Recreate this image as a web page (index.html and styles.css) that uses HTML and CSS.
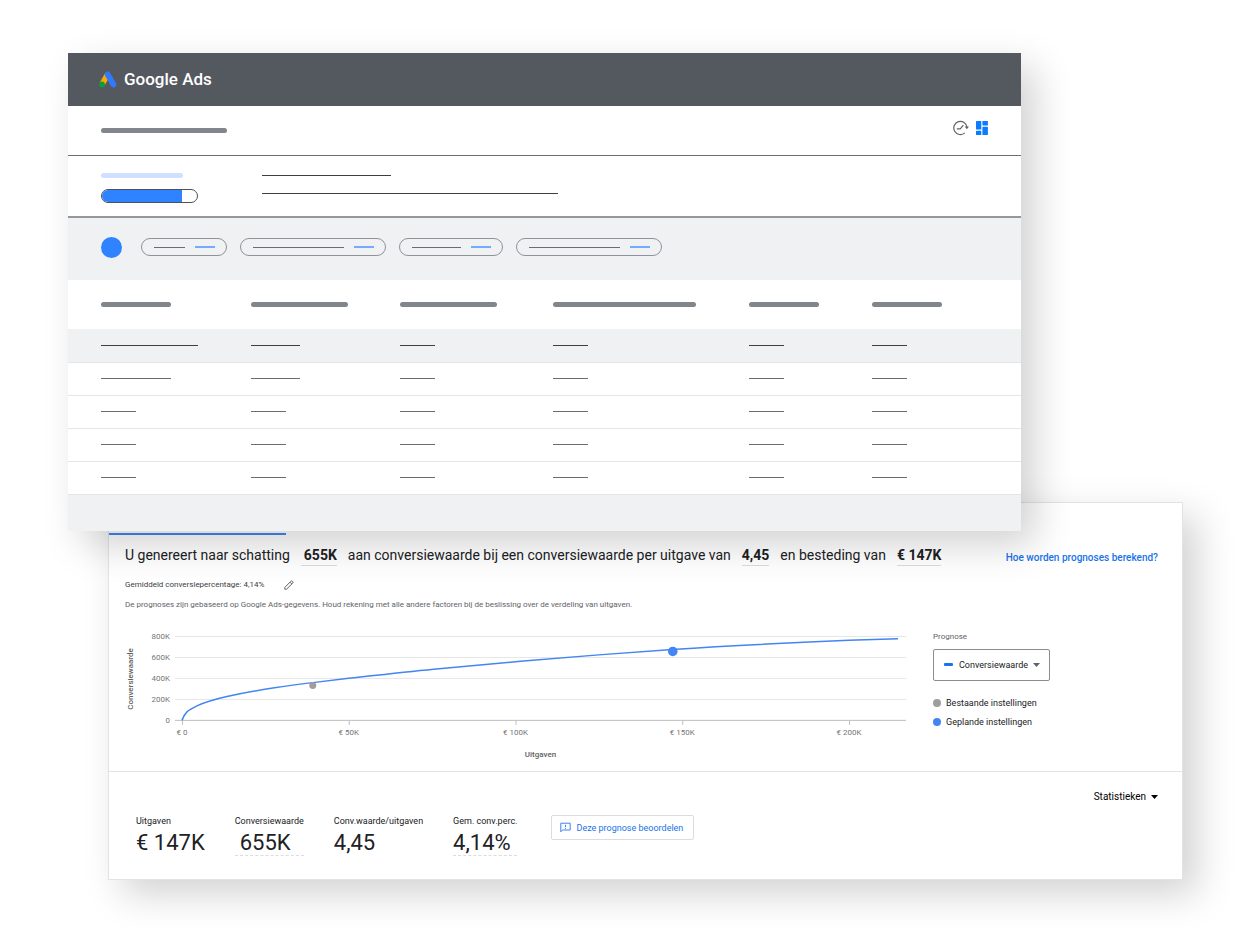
FILE: index.html
```
<!DOCTYPE html>
<html lang="nl">
<head>
<meta charset="utf-8">
<title>Google Ads</title>
<link rel="stylesheet" href="styles.css">
</head>
<body>
<main class="stage">
  <section class="window">
    <header class="brand">
      <svg class="brand-logo" viewBox="0 0 18 17" width="18" height="17">
        <path d="M8.2 4.200 3.600 12.400" stroke="#fbab00" stroke-width="5.6" stroke-linecap="butt"/>
        <path d="M8.600 3.400 14.400 13.400" stroke="#3079fe" stroke-width="5.8" stroke-linecap="round"/>
        <circle cx="3" cy="13.400" r="2.900" fill="#0f9d3c"/>
      </svg>
      <h1 class="brand-name">Google Ads</h1>
    </header>
    <div class="toolbar">
      <span class="bar w-title"></span>
      <div class="toolbar-icons">
        <svg viewBox="0 0 16 16" width="16" height="16" fill="none" stroke="#5f6368" stroke-width="1.2">
          <path d="M14 7.400A6.600 6.600 0 1 0 11.800 12.900"/>
          <path d="M3.800 8.800H7.200L10.400 5.200"/>
          <path d="M11.700 6.600h4.200L13.900 9.200z" fill="#5f6368" stroke="none"/>
        </svg>
        <svg viewBox="0 0 12 14" width="12" height="14" fill="#0d7bff">
          <rect x="0" y="0" width="5.300" height="8.600" rx=".6"/>
          <rect x="0" y="9.800" width="5.300" height="4.200" rx=".6"/>
          <rect x="6.400" y="0" width="5.500" height="4.600" rx=".6"/>
          <rect x="6.400" y="5.800" width="5.500" height="8.200" rx=".6"/>
        </svg>
      </div>
    </div>
    <div class="summary">
      <div class="score">
        <span class="bar bar-light"></span>
        <span class="meter"><span class="meter-fill"></span></span>
      </div>
      <div class="notes">
        <span class="line dark w-note"></span>
        <span class="line dark w-note-long"></span>
      </div>
    </div>
    <div class="filters">
      <span class="add"></span>
      <span class="pill"><span class="line w-31"></span><span class="accent"></span></span>
      <span class="pill"><span class="line w-91"></span><span class="accent"></span></span>
      <span class="pill"><span class="line w-49"></span><span class="accent"></span></span>
      <span class="pill"><span class="line w-91"></span><span class="accent"></span></span>
    </div>
    <table class="grid">
      <colgroup><col class="c1"><col class="c2"><col class="c3"><col class="c4"><col class="c5"><col></colgroup>
      <thead>
        <tr><th><span class="bar w-70"></span></th><th><span class="bar w-97"></span></th><th><span class="bar w-97"></span></th><th><span class="bar w-143"></span></th><th><span class="bar w-70"></span></th><th><span class="bar w-70"></span></th></tr>
      </thead>
      <tbody>
        <tr class="selected"><td><span class="line dark w-97"></span></td><td><span class="line dark w-49"></span></td><td><span class="line dark w-35"></span></td><td><span class="line dark w-35"></span></td><td><span class="line dark w-35"></span></td><td><span class="line dark w-35"></span></td></tr>
        <tr><td><span class="line w-70"></span></td><td><span class="line w-49"></span></td><td><span class="line w-35"></span></td><td><span class="line w-35"></span></td><td><span class="line w-35"></span></td><td><span class="line w-35"></span></td></tr>
        <tr><td><span class="line w-35"></span></td><td><span class="line w-35"></span></td><td><span class="line w-35"></span></td><td><span class="line w-35"></span></td><td><span class="line w-35"></span></td><td><span class="line w-35"></span></td></tr>
        <tr><td><span class="line w-35"></span></td><td><span class="line w-35"></span></td><td><span class="line w-35"></span></td><td><span class="line w-35"></span></td><td><span class="line w-35"></span></td><td><span class="line w-35"></span></td></tr>
        <tr><td><span class="line w-35"></span></td><td><span class="line w-35"></span></td><td><span class="line w-35"></span></td><td><span class="line w-35"></span></td><td><span class="line w-35"></span></td><td><span class="line w-35"></span></td></tr>
      </tbody>
    </table>
    <footer class="window-foot"></footer>
  </section>

  <section class="card">
    <div class="tab-mark"></div>
    <div class="headline-row">
      <h2 class="headline">
        <span>U genereert naar schatting</span>
        <strong class="inset">655K</strong>
        <span>aan conversiewaarde bij een conversiewaarde per uitgave van</span>
        <strong>4,45</strong>
        <span>en besteding van</span>
        <strong>€ 147K</strong>
      </h2>
      <a class="help" href="#">Hoe worden prognoses berekend?</a>
    </div>
    <div class="rate">
      <span>Gemiddeld conversiepercentage: 4,14%</span>
      <button class="edit" type="button">
        <svg viewBox="0 0 10 10" width="10" height="10" fill="none" stroke="#5f6368" stroke-width="1">
          <path d="M.8 9.200V7.400L7 1.200C7.400.8 7.900.8 8.300 1.200L8.800 1.700C9.200 2.100 9.200 2.600 8.800 3L2.600 9.200zM6 2.200 7.800 4"/>
        </svg>
      </button>
    </div>
    <p class="disclaimer">De prognoses zijn gebaseerd op Google Ads-gegevens. Houd rekening met alle andere factoren bij de beslissing over de verdeling van uitgaven.</p>

    <div class="forecast">
      <svg class="chart" viewBox="0 0 785 136">
        <g class="grid-lines">
          <path d="M50 10.500H782M50 31.500H782M50 52.500H782M50 73.500H782"/>
          <path class="axis" d="M50 94.500H782M57.500 95V99M224.500 95V99M391.500 95V99M558.500 95V99M725.500 95V99"/>
        </g>
        <g class="tick end">
          <text x="45" y="13">800K</text><text x="45" y="34">600K</text><text x="45" y="55">400K</text><text x="45" y="76">200K</text><text x="45" y="97">0</text>
        </g>
        <g class="tick mid">
          <text x="57" y="109">€ 0</text><text x="224" y="109">€ 50K</text><text x="391" y="109">€ 100K</text><text x="558" y="109">€ 150K</text><text x="725" y="109">€ 200K</text>
        </g>
        <text class="axis-title" x="416" y="131">Uitgaven</text>
        <text class="axis-title" transform="translate(8 53) rotate(-90)">Conversiewaarde</text>
        <path class="curve" d="M57 94.500C59 89 60.500 87.500 62 86C65 83.500 68 82 72 80C81 76 91 73.200 102 70.700C117 67.300 132 64.600 148 62.200C161 60.200 174 58.300 188 56.700C200 55.200 212 53.700 224 52.300C252 49.200 280 46 309 43.200C338 40.300 367 37.800 396 35.300C447 31 497 27 548 23.500C607 19.500 666 16.700 725 14.300C741 13.700 758 13.100 774 12.700"/>
        <circle cx="188" cy="59.500" r="3.500" fill="#9e9e9e"/>
        <circle cx="548.500" cy="25.500" r="4.800" fill="#4285f4"/>
      </svg>
      <div class="legend">
        <label class="legend-title" for="metric">Prognose</label>
        <div class="select-box">
          <span class="dash"></span>
          <select id="metric" class="select"><option>Conversiewaarde</option></select>
          <svg viewBox="0 0 7 4" width="7" height="4"><path d="M0 0h7L3.500 4z" fill="#5f6368"/></svg>
        </div>
        <ul class="keys">
          <li><span class="dot grey"></span>Bestaande instellingen</li>
          <li><span class="dot"></span>Geplande instellingen</li>
        </ul>
      </div>
    </div>

    <div class="stats-area">
      <button class="stats-toggle" type="button">Statistieken
        <svg viewBox="0 0 7 4" width="7" height="4"><path d="M0 0h7L3.500 4z" fill="#000"/></svg>
      </button>
      <div class="stats">
        <dl class="stat"><dt>Uitgaven</dt><dd>€ 147K</dd></dl>
        <dl class="stat editable indent"><dt>Conversiewaarde</dt><dd>655K</dd></dl>
        <dl class="stat"><dt>Conv.waarde/uitgaven</dt><dd>4,45</dd></dl>
        <dl class="stat editable"><dt>Gem. conv.perc.</dt><dd>4,14%</dd></dl>
        <button class="rate-button" type="button">
          <svg viewBox="0 0 11 11" width="11" height="11" fill="none" stroke="#3b82f0" stroke-width="1">
            <path d="M.8 1.200H10.200V8H2.500L.8 9.800zM5.500 2.800V5M5.500 5.800V6.800"/>
          </svg>
          Deze prognose beoordelen
        </button>
      </div>
    </div>
  </section>
</main>
</body>
</html>
```
FILE: styles.css
```
* { box-sizing: border-box; }

body {
  margin: 0;
  background: #fff;
  color: #202124;
  font-family: Roboto, "Liberation Sans", sans-serif;
  font-size: 8px;
}

.stage { padding: 53px 67px 49px 68px; }

.window,
.card {
  background: #fff;
  box-shadow: 14px 14px 36px rgba(0, 0, 0, .18);
}

/* Account window, lying over the forecast card */
.window {
  position: relative;
  z-index: 1;
  margin-right: 162px;
}

.brand {
  display: flex;
  align-items: center;
  gap: 7px;
  height: 53px;
  padding-left: 31px;
  background: #54585f;
}
.brand-logo { fill: none; }
.brand-name {
  margin: 0;
  padding-bottom: 2px;
  color: #fff;
  font-size: 17px;
  font-weight: 500;
  line-height: 20px;
}

.bar {
  display: block;
  height: 5px;
  border-radius: 3px;
  background: #80868b;
}
.line {
  display: block;
  height: 1px;
  background: #6a6c70;
}
.line.dark { background: #3c4043; }
.accent {
  width: 20px;
  height: 2px;
  background: #74abff;
}

.w-title { width: 126px; }
.w-note { width: 129px; }
.w-note-long { width: 296px; }
.w-31 { width: 31px; }
.w-35 { width: 35px; }
.w-49 { width: 49px; }
.w-70 { width: 70px; }
.w-91 { width: 91px; }
.w-97 { width: 97px; }
.w-143 { width: 143px; }

.toolbar {
  display: flex;
  align-items: center;
  justify-content: space-between;
  height: 50px;
  padding: 0 33px;
  border-bottom: 1px solid #6b6e72;
}
.toolbar-icons {
  display: flex;
  align-items: center;
  gap: 7px;
  padding-bottom: 5px;
}

.summary {
  display: flex;
  gap: 64px;
  height: 62px;
  padding: 17px 33px 0;
  border-bottom: 2px solid #94979b;
}
.bar-light { width: 82px; background: #cfe1ff; }
.meter {
  display: block;
  width: 97px;
  height: 14px;
  margin-top: 11px;
  overflow: hidden;
  border: 1px solid #4d5156;
  border-radius: 7px;
}
.meter-fill {
  display: block;
  width: 84%;
  height: 100%;
  background: #3083ff;
}
.notes {
  display: flex;
  flex-direction: column;
  gap: 17px;
  padding-top: 2px;
}

.filters {
  display: flex;
  align-items: center;
  gap: 13px;
  height: 62px;
  padding: 0 33px 4px;
  background: #f0f1f3;
}
.add {
  width: 21px;
  height: 21px;
  margin-right: 6px;
  border-radius: 50%;
  background: #3083ff;
}
.pill {
  display: flex;
  align-items: center;
  gap: 10px;
  height: 18px;
  padding: 0 11px 0 12px;
  border: 1px solid #8f9297;
  border-radius: 9px;
}

.grid {
  width: 100%;
  table-layout: fixed;
  border-collapse: collapse;
}
.c1 { width: 150px; }
.c2 { width: 149px; }
.c3 { width: 153px; }
.c4 { width: 196px; }
.c5 { width: 123px; }
.grid th,
.grid td { padding: 0 0 0 33px; }
.grid th { height: 49px; }
.grid td {
  height: 33px;
  border-bottom: 1px solid #e4e5e7;
}
.selected { background: #f0f1f3; }
.window-foot { height: 36px; background: #f0f1f3; }

/* Forecast card */
.card {
  margin: -29px 0 0 40px;
  padding-top: 30px;
  border: 1px solid #e1e3e6;
}
.tab-mark {
  width: 177px;
  height: 2px;
  background: #4285f4;
}
.headline-row {
  display: flex;
  justify-content: space-between;
  gap: 16px;
  padding: 10px 24px 0 16px;
}
.headline {
  display: flex;
  gap: 11px;
  margin: 0;
  font-size: 14px;
  font-weight: 400;
  line-height: 20px;
  white-space: nowrap;
}
.headline strong {
  border-bottom: 1px solid #dadce0;
  font-weight: 700;
}
.headline .inset { padding-left: 3px; }
.help {
  padding-top: 6px;
  color: #1a73e8;
  font-size: 10px;
  font-weight: 500;
  line-height: 14px;
  text-decoration: none;
  white-space: nowrap;
}
.rate {
  display: flex;
  align-items: center;
  gap: 20px;
  margin-top: 12px;
  padding-left: 16px;
  color: #3c4043;
  line-height: 14px;
}
button {
  border: 0;
  background: none;
  font: inherit;
  cursor: pointer;
}
.edit { display: flex; padding: 0; }
.disclaimer {
  margin: 6px 16px 0;
  color: #5f6368;
  line-height: 14px;
}

.forecast {
  display: flex;
  gap: 24px;
  padding: 14px 24px 10px 16px;
  border-bottom: 1px solid #e1e3e6;
}
.chart { flex: 1; min-width: 0; }
.grid-lines path { fill: none; stroke: #e6e6e6; }
.grid-lines .axis { stroke: #bdbdbd; }
.tick { fill: #757575; font-size: 8px; }
.end { text-anchor: end; }
.mid { text-anchor: middle; }
.axis-title {
  fill: #616161;
  font-size: 8px;
  font-weight: 500;
  text-anchor: middle;
}
.curve { fill: none; stroke: #4285f4; stroke-width: 1.5; }

.legend { width: 225px; }
.legend-title {
  display: block;
  margin-top: 4px;
  color: #5f6368;
  line-height: 14px;
}
.select-box {
  display: inline-flex;
  align-items: center;
  gap: 4px;
  height: 32px;
  margin-top: 5px;
  padding: 0 9px 0 10px;
  border: 1px solid #8a8d91;
  border-radius: 2px;
}
.dash {
  width: 9px;
  height: 3px;
  margin-right: 2px;
  border-radius: 1px;
  background: #1a73e8;
}
.select {
  padding: 0;
  border: 0;
  appearance: none;
  background: none;
  color: #202124;
  font: inherit;
  font-size: 9px;
}
.keys {
  display: grid;
  gap: 5px;
  margin: 15px 0 0;
  padding: 0;
  font-size: 9px;
  line-height: 14px;
  list-style: none;
}
.keys li { display: flex; align-items: center; gap: 5px; }
.dot {
  width: 8px;
  height: 8px;
  border-radius: 50%;
  background: #4285f4;
}
.dot.grey { background: #9e9e9e; }

.stats-area { padding: 18px 24px 23px 27px; }
.stats-toggle {
  display: flex;
  align-items: center;
  gap: 5px;
  margin-left: auto;
  padding: 0;
  color: #000;
  font-size: 10px;
  line-height: 14px;
}
.stats { display: flex; align-items: flex-start; margin-top: 11px; }
.stat { margin: 0 30px 0 0; font-size: 9px; }
.stat:nth-child(4) { margin-right: 34px; }
.stat dt { line-height: 12px; }
.stat dd {
  margin: 0;
  padding-top: 4px;
  border-bottom: 1px solid transparent;
  font-size: 22px;
  line-height: 24px;
}
.editable dd { border-bottom: 1px dashed #dadce0; }
.indent dd { padding-left: 5px; }
.rate-button {
  display: flex;
  align-items: center;
  gap: 5px;
  height: 25px;
  padding: 0 10px 0 8px;
  border: 1px solid #dadce0;
  border-radius: 2px;
  color: #1a73e8;
  font-size: 9px;
}
```
